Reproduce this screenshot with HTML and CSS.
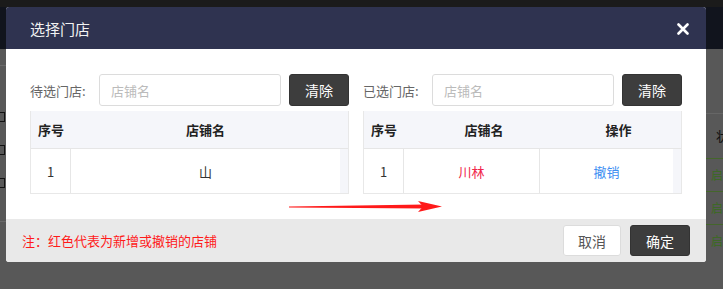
FILE: index.html
```html
<!DOCTYPE html>
<html lang="zh-CN">
<head>
    <meta charset="UTF-8">
    <title>选择门店</title>
    <link rel="stylesheet" href="styles.css">
</head>
<body>
    <div class="page">
        <div class="page-top"></div>
        <div class="page-header"></div>
        <div class="page-left">
            <span class="left-line"></span>
            <span class="left-icon"></span>
            <span class="left-icon"></span>
            <span class="left-icon"></span>
            <span class="left-line bottom"></span>
        </div>
        <div class="page-right">
            <div class="right-head">状</div>
            <div class="right-cell">启</div>
            <div class="right-cell">启</div>
            <div class="right-cell">启</div>
        </div>
    </div>

    <div class="dialog">
        <div class="dialog-header">
            <span class="dialog-title">选择门店</span>
            <svg class="close" width="12" height="12" viewBox="0 0 12 12">
                <path d="M1.5 1.5 L10.5 10.5 M10.5 1.5 L1.5 10.5" stroke="#fff" stroke-width="2.6" stroke-linecap="round"/>
            </svg>
        </div>

        <div class="dialog-body">
            <div class="panel">
                <div class="search">
                    <span class="label">待选门店:</span>
                    <input class="input" type="text" placeholder="店铺名">
                    <button class="btn-dark">清除</button>
                </div>
                <div class="table">
                    <div class="row head">
                        <div class="cell col-no">序号</div>
                        <div class="cell col-name">店铺名</div>
                        <div class="gutter"></div>
                    </div>
                    <div class="row body-row">
                        <div class="cell col-no">1</div>
                        <div class="cell col-name">山</div>
                        <div class="gutter"></div>
                    </div>
                </div>
            </div>

            <div class="panel">
                <div class="search">
                    <span class="label">已选门店:</span>
                    <input class="input" type="text" placeholder="店铺名">
                    <button class="btn-dark">清除</button>
                </div>
                <div class="table">
                    <div class="row head">
                        <div class="cell col-no">序号</div>
                        <div class="cell col-shop">店铺名</div>
                        <div class="cell col-op">操作</div>
                        <div class="gutter"></div>
                    </div>
                    <div class="row body-row">
                        <div class="cell col-no">1</div>
                        <div class="cell col-shop new">川林</div>
                        <div class="cell col-op link">撤销</div>
                        <div class="gutter"></div>
                    </div>
                </div>
            </div>

            <svg class="arrow" width="154" height="16" viewBox="0 0 154 16">
                <path d="M0 7.6 L136 5.6 L136 9.4 L0 8.4 Z" fill="#ff1a1a"/>
                <path d="M129 2 L153 7.5 L129 13 L134 7.5 Z" fill="#ff1a1a"/>
            </svg>
        </div>

        <div class="dialog-footer">
            <span class="note">注：红色代表为新增或撤销的店铺</span>
            <div class="actions">
                <button class="btn-light">取消</button>
                <button class="btn-dark btn-ok">确定</button>
            </div>
        </div>
    </div>
</body>
</html>
```

FILE: styles.css
```css
* {
    margin: 0;
    padding: 0;
    box-sizing: border-box;
}

body {
    font-family: 'Noto Sans CJK SC', 'Noto Sans', sans-serif;
    background-color: #585858;
    width: 723px;
    height: 289px;
    overflow: hidden;
    position: relative;
}

/* dimmed page behind the dialog */
.page {
    position: absolute;
    inset: 0;
}

.page-top {
    height: 7px;
    background-color: #1b1b1b;
}

.page-header {
    height: 42px;
    background-color: #11141d;
}

.page-left {
    position: absolute;
    left: 0;
    top: 49px;
    width: 6px;
    display: flex;
    flex-direction: column;
    padding-top: 16px;
}

.left-line {
    height: 1px;
    background-color: #6a6a6a;
    margin-bottom: 46px;
}

.left-line.bottom {
    margin-top: 10px;
    margin-bottom: 0;
}

.left-icon {
    height: 10px;
    width: 10px;
    margin-left: -5px;
    margin-bottom: 23px;
    border: 1px solid #111;
}

.page-right {
    position: absolute;
    left: 706px;
    top: 113px;
    width: 17px;
    border-top: 1px solid #666;
}

.right-head {
    height: 44px;
    line-height: 44px;
    padding-left: 10px;
    font-size: 13px;
    color: #111;
}

.right-cell {
    height: 33px;
    line-height: 32px;
    padding-left: 5px;
    font-size: 12px;
    color: #3a6b1d;
    border-top: 1px solid #44662b;
}

/* dialog */
.dialog {
    position: absolute;
    left: 6px;
    top: 7px;
    width: 700px;
    height: 255px;
    border-radius: 3px;
    overflow: hidden;
    background-color: #fff;
    display: flex;
    flex-direction: column;
}

.dialog-header {
    height: 42px;
    background-color: #2f3350;
    display: flex;
    align-items: center;
    justify-content: space-between;
    padding: 0 17px 0 24px;
}

.dialog-title {
    font-size: 15px;
    color: #f2f2f2;
}

.close {
    margin-top: 2px;
}

.dialog-body {
    height: 170px;
    padding: 25px 24px 0;
    display: flex;
    gap: 14px;
    position: relative;
}

.panel {
    width: 319px;
}

.search {
    display: flex;
    align-items: center;
    height: 32px;
}

.label {
    width: 69px;
    font-size: 13px;
    color: #666;
}

.input {
    flex: 1;
    height: 32px;
    border: 1px solid #dcdcdc;
    border-radius: 3px;
    padding: 0 11px;
    font-family: inherit;
    font-size: 13px;
    outline: none;
}

.input::placeholder {
    color: #bbb;
}

.btn-dark {
    width: 60px;
    height: 32px;
    margin-left: 8px;
    border: 1px solid #333;
    border-radius: 3px;
    background-color: #3d3d3d;
    color: #fff;
    font-family: inherit;
    font-size: 14px;
}

.table {
    margin-top: 5px;
    border: 1px solid #e8e8e8;
    border-top: none;
    font-size: 13px;
    color: #333;
}

.row {
    display: flex;
}

.row.head {
    height: 38px;
    background-color: #f5f6fa;
    font-weight: bold;
    color: #222;
    border-bottom: 1px solid #e6e6e6;
}

.row.body-row {
    height: 44px;
}

.cell {
    display: flex;
    align-items: center;
    justify-content: center;
}

.col-no {
    width: 40px;
}

.body-row .col-no {
    border-right: 1px solid #e6e6e6;
}

.col-name {
    flex: 1;
}

.col-shop {
    width: 136px;
    border-right: 1px solid #e6e6e6;
}

.head .col-shop {
    width: 160px;
    border-right: none;
}

.col-op {
    flex: 1;
}

.gutter {
    width: 8px;
    background-color: #f5f6fa;
}

.head .gutter {
    background-color: transparent;
}

.new {
    color: #f0264a;
}

.link {
    color: #3d8ef2;
}

.arrow {
    position: absolute;
    left: 283px;
    top: 150px;
}

.dialog-footer {
    height: 43px;
    background-color: #e9e9e9;
    display: flex;
    align-items: center;
    justify-content: space-between;
    padding: 0 16px;
}

.note {
    font-size: 13px;
    color: #ff1a1a;
}

.actions {
    display: flex;
    gap: 9px;
}

.btn-light {
    width: 58px;
    height: 31px;
    border: 1px solid #dcdcdc;
    border-radius: 3px;
    background-color: #fff;
    color: #555;
    font-family: inherit;
    font-size: 14px;
}

.btn-ok {
    height: 31px;
    margin-left: 0;
}
```
